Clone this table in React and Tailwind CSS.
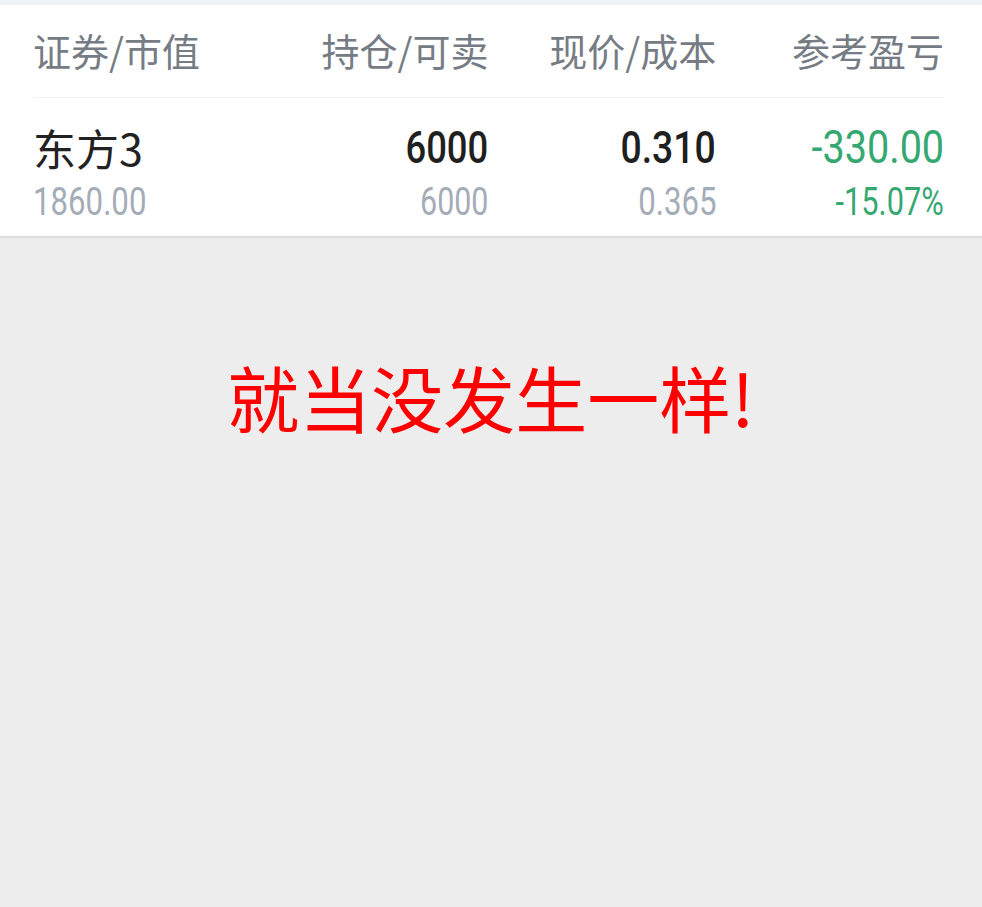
export default function App() {
  const cjk = { fontFamily: '"Noto Sans CJK SC", "Noto Sans", sans-serif' };
  const num = { fontFamily: 'Roboto, "Noto Sans", sans-serif' };

  return (
    <div className="min-h-[907px] bg-[#ededed] flex flex-col">
      {/* top strip */}
      <div className="h-[5px] bg-[#eef1f5]" />

      <div className="bg-white pl-[33px] pr-[38px]">
        {/* table header */}
        <div className="grid grid-cols-4 h-[93px] items-center pb-[4px] border-b border-[#f0f0f0] text-[38px] text-[#767c84]" style={cjk}>
          <div>证券/市值</div>
          <div className="text-right">持仓/可卖</div>
          <div className="text-right">现价/成本</div>
          <div className="text-right">参考盈亏</div>
        </div>

        {/* position row */}
        <div className="grid grid-cols-4 h-[138px] content-center pt-[22px]">
          <div className="flex flex-col">
            <div className="text-[43px] leading-[53px] text-[#222]" style={cjk}>东方3</div>
            <div className="leading-[53px] mt-[2px]">
              <span className="inline-block origin-left scale-x-[0.8] text-[39px] text-[#a4acb7]" style={num}>1860.00</span>
            </div>
          </div>
          <div className="flex flex-col items-end">
            <span className="inline-block origin-right scale-x-[0.81] text-[45px] leading-[53px] font-medium text-[#1f1f1f]" style={num}>6000</span>
            <span className="inline-block origin-right scale-x-[0.8] mt-[2px] text-[38px] leading-[53px] text-[#a4acb7]" style={num}>6000</span>
          </div>
          <div className="flex flex-col items-end">
            <span className="inline-block origin-right scale-x-[0.83] text-[45px] leading-[53px] font-medium text-[#1f1f1f]" style={num}>0.310</span>
            <span className="inline-block origin-right scale-x-[0.82] mt-[2px] text-[38px] leading-[53px] text-[#a4acb7]" style={num}>0.365</span>
          </div>
          <div className="flex flex-col items-end">
            <span className="inline-block origin-right scale-x-[0.86] text-[46px] leading-[53px] text-[#35a872]" style={num}>-330.00</span>
            <span className="inline-block origin-right scale-x-[0.81] mt-[2px] text-[38px] leading-[53px] text-[#35a872]" style={num}>-15.07%</span>
          </div>
        </div>
      </div>
      <div className="h-[2px] bg-[#dedede]" />

      {/* message */}
      <div className="flex justify-center pt-[118px]">
        <div className="text-[72px] leading-[80px] text-[#ff0000]" style={cjk}>就当没发生一样!</div>
      </div>
    </div>
  );
}
